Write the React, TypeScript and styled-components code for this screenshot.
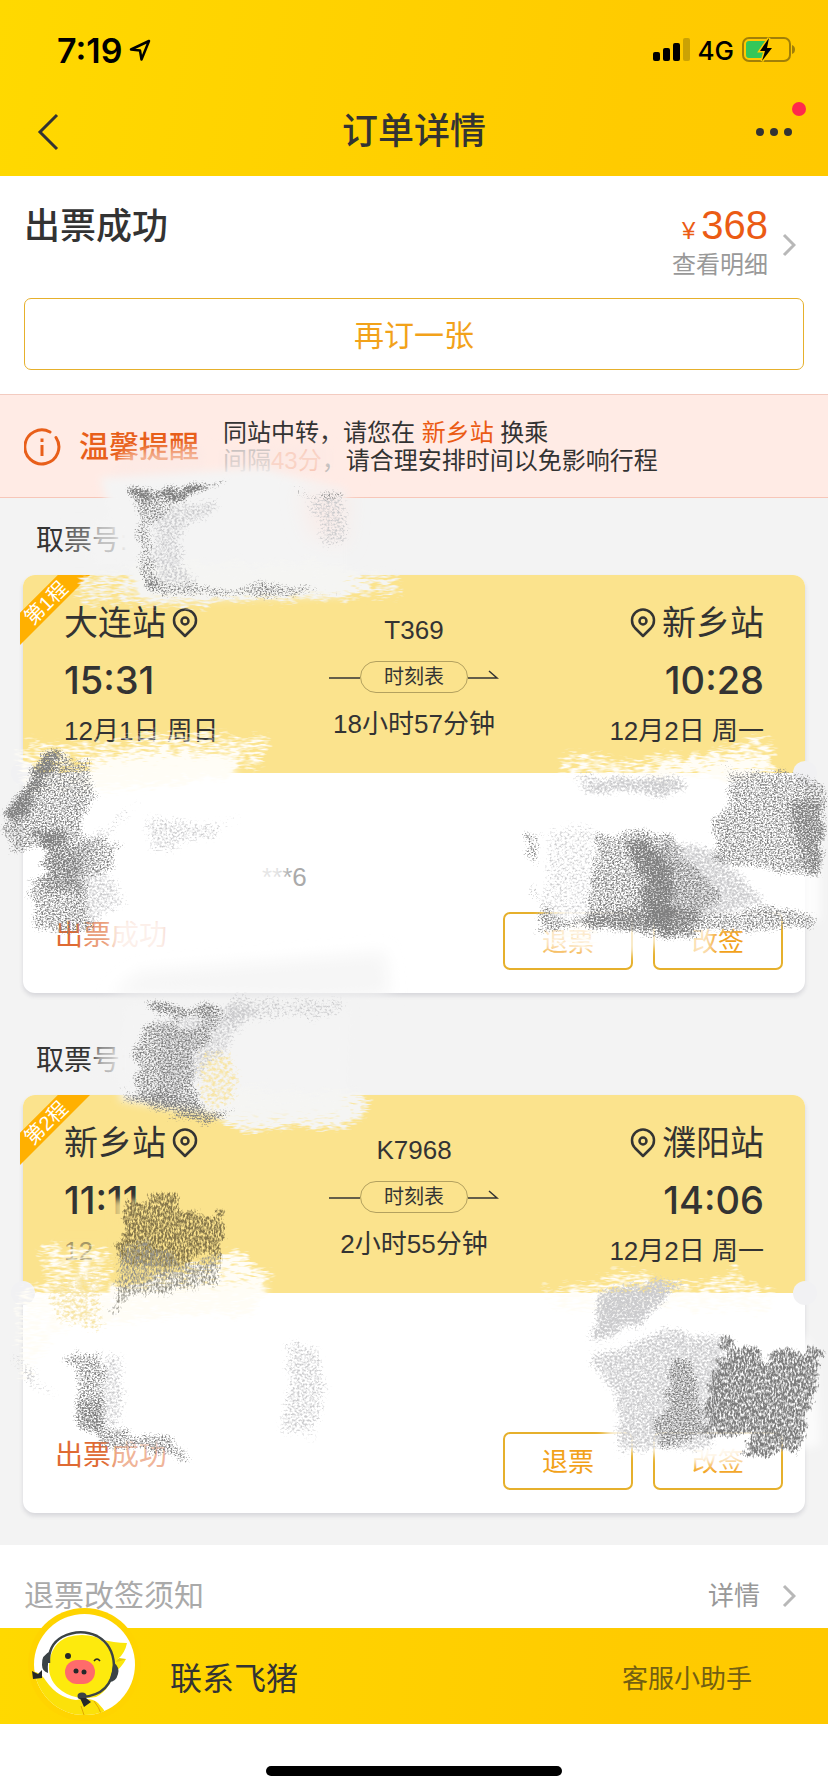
import React from "react";
import styled, { createGlobalStyle } from "styled-components";

const GlobalStyle = createGlobalStyle`
  *, *::before, *::after { box-sizing: border-box; }
  body { margin: 0; background: #fff; }
  body, button { font-family: "Liberation Sans", "Noto Sans CJK SC", sans-serif; color: #333; }
  h1, h2, p { margin: 0; font-weight: 400; }
`;

const Page = styled.div`
  position: relative;
  overflow: hidden;
  min-height: 100vh;
  display: flex;
  flex-direction: column;
`;

/* ---------- header ---------- */

const Header = styled.header`
  background: linear-gradient(100deg, #ffd900 0%, #ffcb00 75%, #ffc900 100%);
`;

const StatusBar = styled.div`
  display: flex;
  align-items: center;
  height: 88px;
  padding: 12px 32px 0 57px;
  font-family: Inter, sans-serif;
  color: #000;
`;

const Clock = styled.span`
  font-size: 34px;
  font-weight: 600;
  margin-right: 6px;
`;

const StatusIcons = styled.div`
  display: flex;
  align-items: center;
  gap: 8px;
  margin-left: auto;
`;

const Network = styled.span`
  font-size: 26px;
  font-weight: 500;
`;

const NavBar = styled.div`
  display: grid;
  grid-template-columns: 120px 1fr 120px;
  align-items: center;
  height: 88px;
`;

const NavTitle = styled.h1`
  text-align: center;
  font-size: 36px;
  line-height: 48px;
  font-weight: 500;
`;

const NavButton = styled.button<{ $end?: boolean }>`
  position: relative;
  display: flex;
  align-items: center;
  justify-content: ${(p) => (p.$end ? "flex-end" : "flex-start")};
  height: 88px;
  padding: 0 36px;
  border: 0;
  background: none;
`;

const UnreadDot = styled.span`
  position: absolute;
  top: 14px;
  right: 22px;
  width: 14px;
  height: 14px;
  border-radius: 50%;
  background: #ff2a4c;
`;

/* ---------- order summary ---------- */

const Summary = styled.section`
  padding: 24px;
  background: #fff;
`;

const SummaryTop = styled.div`
  display: flex;
  justify-content: space-between;
  margin-bottom: 18px;
`;

const SummaryTitle = styled.h2`
  font-size: 36px;
  line-height: 54px;
  font-weight: 500;
`;

const PriceLink = styled.a`
  display: flex;
  align-items: center;
  gap: 14px;
  padding-right: 8px;
  color: #999;
  text-decoration: none;

  > svg {
    margin-top: 10px;
  }
`;

const PriceColumn = styled.span`
  display: flex;
  flex-direction: column;
  align-items: flex-end;
  font-size: 24px;
  line-height: 30px;
`;

const Price = styled.span`
  display: flex;
  align-items: baseline;
  height: 50px;
  font-size: 40px;
  line-height: 50px;
  color: #eb5b14;
`;

const Currency = styled.small`
  font-size: 24px;
  margin-right: 6px;
`;

const OutlineButton = styled.button<{ $size: "wide" | "small" }>`
  width: ${(p) => (p.$size === "wide" ? "100%" : "130px")};
  height: ${(p) => (p.$size === "wide" ? 72 : 58)}px;
  padding: 0 0 3px;
  border: ${(p) => (p.$size === "wide" ? 1 : 2)}px solid #e6b02c;
  border-radius: 7px;
  background: #fff;
  color: #f2a21a;
  font-size: ${(p) => (p.$size === "wide" ? 30 : 26)}px;
`;

/* ---------- transfer notice ---------- */

const Notice = styled.section`
  display: flex;
  align-items: center;
  min-height: 104px;
  padding: 1px 24px 0;
  background: #ffebe5;
  border-top: 1px solid #f3cbc0;
  border-bottom: 1px solid #f7c6b8;
`;

const NoticeTitle = styled.h2`
  margin: 0 24px 0 18px;
  font-size: 30px;
  line-height: 40px;
  font-weight: 500;
  color: #e85f1a;
`;

const NoticeText = styled.p`
  font-size: 24px;
  line-height: 28px;
`;

const Accent = styled.span<{ $faded?: boolean }>`
  color: ${(p) => (p.$faded ? "#f6b49a" : "#eb5b14")};
`;

const Muted = styled.span`
  color: #aaa;
`;

/* ---------- tickets ---------- */

const Trips = styled.main`
  display: flex;
  flex-direction: column;
  gap: 25px;
  padding: 0 23px 32px;
  background: #f3f3f3;
`;

const PickupLabel = styled.h2`
  height: 77px;
  padding: 23px 0 0 13px;
  font-size: 28px;
  line-height: 40px;
`;

const Card = styled.article`
  position: relative;
  border-radius: 12px;
  background: #fff;
  box-shadow: 0 3px 4px rgba(60, 60, 90, 0.15);
`;

const Journey = styled.div`
  position: relative;
  display: grid;
  grid-template-columns: 1fr 170px 1fr;
  height: 198px;
  padding: 28px 41px 0;
  border-radius: 12px 12px 0 0;
  background: #fbe38d;
`;

const Perforation = styled.div`
  position: absolute;
  left: 0;
  right: 0;
  bottom: -1px;
  border-bottom: 1px dashed #fff;
`;

const Notch = styled.span<{ $side: "left" | "right" }>`
  position: absolute;
  bottom: -12px;
  ${(p) => p.$side}: -12px;
  width: 24px;
  height: 24px;
  border-radius: 50%;
  background: #f1f1f3;
`;

const Ribbon = styled.div`
  position: absolute;
  top: 0;
  left: -3px;
  width: 70px;
  height: 70px;
  background: #ffb000;
  clip-path: polygon(0 54%, 54% 0, 100% 0, 0 100%);
`;

const RibbonText = styled.span`
  position: absolute;
  top: 14px;
  left: -6px;
  width: 64px;
  text-align: center;
  font-size: 20px;
  line-height: 28px;
  color: #fff;
  transform: rotate(-45deg);
`;

const Stop = styled.div<{ $end?: boolean }>`
  display: flex;
  flex-direction: column;
  align-items: ${(p) => (p.$end ? "flex-end" : "flex-start")};
`;

const Station = styled.div<{ $end?: boolean }>`
  display: flex;
  flex-direction: ${(p) => (p.$end ? "row-reverse" : "row")};
  align-items: center;
  gap: 6px;
  font-size: 34px;
  line-height: 40px;
`;

const Time = styled.time`
  margin: 13px 0 11px;
  font-family: Inter, sans-serif;
  font-size: 38px;
  line-height: 48px;
  font-weight: 500;
`;

const DateText = styled.span`
  font-size: 26px;
  line-height: 32px;
  white-space: nowrap;
`;

const Middle = styled.div`
  display: flex;
  flex-direction: column;
  align-items: center;
  gap: 15px;
  padding-top: 11px;
  font-size: 26px;
  line-height: 32px;
  white-space: nowrap;
`;

const TimetableRow = styled.div`
  display: flex;
  align-items: center;
`;

const TimetableButton = styled.button`
  width: 108px;
  height: 32px;
  padding: 0;
  border: 1px solid #b3a15f;
  border-radius: 16px;
  background: none;
  font-size: 20px;
  line-height: 28px;
`;

const Passenger = styled.div`
  height: 220px;
  padding: 88px 22px 0 32px;
`;

const IdTail = styled.p`
  height: 32px;
  margin-bottom: 19px;
  padding-left: 207px;
  font-size: 26px;
  line-height: 32px;
  color: #aaa;
`;

const Actions = styled.div`
  display: flex;
  gap: 20px;
`;

const TicketState = styled.span`
  margin-right: auto;
  font-size: 28px;
  line-height: 48px;
  color: #df6a33;
`;

/* ---------- footer ---------- */

const RulesLink = styled.a`
  display: flex;
  align-items: flex-start;
  justify-content: space-between;
  padding: 31px 32px 12px 24px;
  background: #fff;
  color: #aaa;
  text-decoration: none;
  font-size: 30px;
  line-height: 40px;
`;

const RulesDetail = styled.span`
  display: flex;
  align-items: center;
  gap: 22px;
  font-size: 26px;
  color: #999;
`;

const Contact = styled.a`
  position: relative;
  display: flex;
  align-items: center;
  justify-content: space-between;
  height: 96px;
  padding: 0 76px 0 170px;
  background: linear-gradient(95deg, #ffd900 0%, #ffcb00 75%, #ffc900 100%);
  color: #333;
  text-decoration: none;
  font-size: 32px;
`;

const Helper = styled.span`
  font-size: 26px;
  color: #735f12;
`;

const Avatar = styled.svg`
  position: absolute;
  left: 24px;
  bottom: 0;
`;

const HomeArea = styled.div`
  display: flex;
  justify-content: center;
  padding: 42px 0 16px;
`;

const HomeBar = styled.span`
  width: 296px;
  height: 10px;
  border-radius: 5px;
  background: #000;
`;

const Scribbles = styled.svg`
  position: absolute;
  top: 0;
  left: 0;
  width: 100%;
  pointer-events: none;
`;

/* ---------- icons ---------- */

const LocationArrow = () => (
  <svg width="24" height="24" viewBox="0 0 24 24" fill="none" stroke="#000" strokeWidth="2.5" strokeLinejoin="round">
    <path d="M21 3 L3 11.5 L12 12.5 L13.5 21.5 Z" />
  </svg>
);

const Signal = () => (
  <svg width="37" height="24" viewBox="0 0 37 24">
    <rect x="0" y="14" width="7" height="9" rx="2" />
    <rect x="10" y="10" width="7" height="13" rx="2" />
    <rect x="20" y="5" width="7" height="18" rx="2" />
    <rect x="30" y="0" width="7" height="23" rx="2" fill="#cba204" />
  </svg>
);

const Battery = () => (
  <svg width="54" height="28" viewBox="0 0 54 28">
    <rect x="1" y="2" width="47" height="23" rx="6" fill="none" stroke="#a17f08" strokeWidth="2" />
    <path d="M7 5 H27 L20 15 H24 L21 22 H7 Q4 22 4 19 V8 Q4 5 7 5Z" fill="#34c759" />
    <path d="M50 9 Q53 10 53 13.5 Q53 17 50 18Z" fill="#a17f08" />
    <path d="M27 2 L18 15 H23 L20 25 L30 12 H25Z" fill="#000" stroke="#ffcb00" strokeWidth="3" paintOrder="stroke" />
  </svg>
);

const BackIcon = () => (
  <svg width="24" height="38" viewBox="0 0 24 38" fill="none" stroke="#333" strokeWidth="3">
    <path d="M21 2 L4 19 L21 36" />
  </svg>
);

const MoreIcon = () => (
  <svg width="36" height="8" viewBox="0 0 36 8" fill="#333">
    <circle cx="4" cy="4" r="4" />
    <circle cx="18" cy="4" r="4" />
    <circle cx="32" cy="4" r="4" />
  </svg>
);

const Chevron = () => (
  <svg width="14" height="24" viewBox="0 0 14 24" fill="none" stroke="#b8b8b8" strokeWidth="3">
    <path d="M2 2 L12 12 L2 22" />
  </svg>
);

const InfoIcon = () => (
  <svg width="37" height="38" viewBox="0 0 37 38" fill="none" stroke="#e85f1a" strokeWidth="3">
    <path d="M26 4 A17 17 0 1 0 32 9.5" strokeLinecap="round" />
    <path d="M18 17 V28" />
    <path d="M18 10.5 V14" />
  </svg>
);

const Pin = () => (
  <svg width="26" height="30" viewBox="0 0 26 30" fill="none" stroke="#333" strokeWidth="2.5">
    <path d="M13 28 L5 20 A11 11 0 1 1 21 20 Z" strokeLinejoin="round" />
    <circle cx="13" cy="13" r="3.5" />
  </svg>
);

const Lead = () => (
  <svg width="31" height="16" viewBox="0 0 31 16" stroke="#333" strokeWidth="1.5">
    <path d="M0 9 H31" />
  </svg>
);

const Arrow = () => (
  <svg width="31" height="16" viewBox="0 0 31 16" fill="none" stroke="#333" strokeWidth="1.5">
    <path d="M0 9 H29 L21 2" />
  </svg>
);

const PigAvatar = () => (
  <Avatar width="120" height="119" viewBox="0 0 120 119" aria-hidden="true">
    <defs>
      <clipPath id="face">
        <circle cx="60.5" cy="59.5" r="50.5" />
      </clipPath>
    </defs>
    <circle cx="60.5" cy="59.5" r="56.5" fill="#ffd400" />
    <circle cx="60.5" cy="59.5" r="50.5" fill="#fff" />
    <g clipPath="url(#face)">
      <path d="M76 34 Q90 38 103 38 Q101 48 94 54 L102 54 Q98 62 90 68 Z" fill="#fbe70c" />
      <path d="M92 57 Q98 56 102 54 L95 53Z" fill="#e9cd08" />
      <path d="M6 66 Q16 66 22 76 Q34 93 52 95 Q68 92 74 98 Q80 104 84 112 L60 122 L6 118Z" fill="#fbe10a" />
      <path d="M20 70 Q30 90 54 94 Q74 92 88 72 Q90 40 72 31 Q58 27 44 31 Q22 42 22 60 Z" fill="#fff" />
      <path d="M25 60 Q27 38 44 32 Q58 28 72 32 Q89 41 90 62 Q88 84 72 92 Q52 96 38 86 Q24 76 25 60Z" fill="#fdea0d" />
      <path d="M57 101 L61 113 M70 96 Q75 102 78 111" stroke="#e0a700" fill="none" />
    </g>
    <path d="M25 58 Q24 40 38 32 Q56 23 73 31 Q89 40 90 60 Q88 90 58 92" fill="none" stroke="#3b4346" strokeWidth="2.5" />
    <path d="M27 46 Q17 50 18 60 Q18 66 24 68 Q23 56 27 46Z" fill="#3b4346" />
    <path d="M89 57 Q96 62 94 69 Q92 77 85 77 Q89 67 89 57Z" fill="#3b4346" />
    <ellipse cx="58" cy="91" rx="4.5" ry="3.5" fill="#3b4346" />
    <path d="M8 66 L14 69 L18 65 L18 73 L9 74Z M56 93 L60 102 L67 97 L62 93Z" fill="#25282a" />
    <circle cx="44" cy="51" r="3" fill="#25282a" />
    <path d="M70 56 Q73 52 76 56" fill="none" stroke="#25282a" strokeWidth="1.5" />
    <rect x="41" y="55" width="30" height="24" rx="12" fill="#ff6b6b" />
    <circle cx="52" cy="66" r="2.5" fill="#25282a" />
    <circle cx="60" cy="67" r="2.5" fill="#25282a" />
  </Avatar>
);

/* ---------- crayon and eraser marks over private data ---------- */

type Mark = [d: string, strength: number];
type Layer = { id: string; color: string; freq: string; blur: number; marks: Mark[] };

const washes: Layer[] = [
  {
    id: "blush", color: "#fbeae5", freq: "", blur: 5,
    marks: [["M222 449 L330 445 L330 472 L222 476Z", 0.6], ["M125 452 L205 446 L202 476 L110 480Z", 0.6]],
  },
  {
    id: "paper", color: "#f4f4f4", freq: "", blur: 4,
    marks: [
      ["M100 478 L262 468 L345 490 L345 595 L145 600 L122 550Z", 1],
      ["M94 520 L132 520 L132 565 L94 565Z", 0.75],
      ["M68 522 L94 522 L94 558 L68 558Z", 0.3],
      ["M125 1005 L350 1010 L345 1115 L230 1118 L120 1100Z", 1],
      ["M96 1045 L140 1045 L140 1080 L96 1080Z", 0.7],
      ["M116 1042 L140 1042 L140 1080 L116 1080Z", 1],
    ],
  },
  {
    id: "rose", color: "#fbe9e5", freq: "", blur: 10,
    marks: [["M300 490 L350 490 L345 545 L310 535Z", 0.7]],
  },
  {
    id: "mist", color: "#f4f4f4", freq: "", blur: 8,
    marks: [["M140 972 L385 952 L390 996 L320 1000 L110 995Z", 0.8]],
  },
  {
    id: "butter", color: "#fbe38d", freq: "", blur: 3,
    marks: [
      ["M112 1200 L140 1200 L140 1225 L112 1225Z", 0.85],
      ["M62 1238 L100 1238 L100 1268 L62 1268Z", 0.6],
    ],
  },
  {
    id: "white", color: "#fff", freq: "", blur: 4,
    marks: [
      ["M95 772 L120 762 L230 757 L240 790 L250 900 L80 900 L60 800Z", 0.95],
      ["M112 915 L170 915 L170 955 L112 955Z", 0.9],
      ["M84 915 L112 915 L112 955 L84 955Z", 0.35],
      ["M250 860 L284 860 L284 890 L250 890Z", 0.7],
      ["M548 904 L640 904 L790 904 L790 916 L690 928 L640 955 L535 950 L535 925Z", 0.75],
      ["M688 925 L712 925 L712 958 L688 958Z", 0.7],
      ["M560 905 L775 905 L770 925 L560 930Z", 0.8],
      ["M660 785 L795 795 L820 815 L820 920 L700 930Z", 0.8],
      ["M110 1290 L265 1285 L260 1460 L110 1440Z", 0.95],
      ["M112 1440 L175 1440 L175 1475 L112 1475Z", 0.5],
      ["M598 1424 L790 1424 L790 1446 L700 1462 L620 1450Z", 0.85],
      ["M685 1440 L760 1440 L760 1466 L685 1466Z", 0.65],
      ["M640 1300 L785 1315 L815 1350 L820 1445 L795 1450 L785 1370Z", 0.7],
    ],
  },
];

const grains: Layer[] = [
  {
    id: "paperGrain", color: "#f5f5f3", freq: "0.1 0.45", blur: 5,
    marks: [
      ["M75 570 L400 570 L405 600 L300 602 L160 610 L75 604Z", 0.6],
      ["M130 560 L345 560 L375 590 L240 600 L135 592Z", 0.8],
      ["M230 1085 L368 1088 L368 1116 L340 1130 L235 1132 L205 1112Z", 0.85],
    ],
  },
  {
    id: "whiteGrain", color: "#fffdf6", freq: "0.1 0.4", blur: 5,
    marks: [
      ["M12 742 L90 738 L190 728 L275 738 L262 770 L130 795 L20 798Z", 0.58],
      ["M100 757 L232 752 L235 780 L75 785Z", 0.85],
      ["M568 748 L610 758 L700 750 L772 730 L778 765 L770 780 L545 780Z", 0.6],
      ["M660 765 L765 757 L770 780 L640 782Z", 0.8],
      ["M40 1240 L115 1245 L110 1320 L60 1335 L15 1395 L15 1285 L40 1285Z", 0.58],
      ["M115 1290 L235 1250 L275 1272 L258 1315 L95 1325Z", 0.8],
      ["M532 1288 L630 1268 L690 1285 L732 1266 L775 1290 L775 1315 L560 1315Z", 0.58],
      ["M570 915 L600 915 L600 950 L545 945Z", 0.5],
    ],
  },
  {
    id: "straw", color: "#f7e5a8", freq: "0.25 0.35", blur: 5,
    marks: [
      ["M195 1050 L240 1050 L235 1100 L200 1112Z", 0.55],
      ["M45 1282 L105 1265 L102 1335 L55 1325Z", 0.55],
    ],
  },
  {
    id: "faint", color: "#cbcbcd", freq: "0.4 0.5", blur: 5,
    marks: [
      ["M140 815 L250 818 L190 850 L150 855Z", 0.48],
      ["M574 776 L686 776 L686 796 L580 794Z", 0.7],
      ["M545 825 L600 825 L595 930 L540 925Z", 0.42],
      ["M150 790 L90 860 L130 900 L85 935 L60 860Z", 0.52],
      ["M225 995 L345 998 L340 1020 L230 1022Z", 0.48],
      ["M595 1290 L695 1274 L640 1325 L590 1345Z", 0.75],
      ["M588 1354 L670 1328 L730 1340 L712 1450 L620 1455 L605 1390Z", 0.62],
      ["M285 1338 L320 1340 L328 1390 L318 1440 L280 1438Z", 0.5],
      ["M100 1350 L125 1355 L125 1430 L95 1430Z", 0.52],
      ["M0 1342 L38 1375 L70 1402 L30 1388Z", 0.55],
      ["M300 490 L345 495 L350 545 L325 550Z", 0.5],
      ["M150 505 L225 500 L180 540 L200 585 L150 590Z", 0.54],
      ["M215 1005 L250 1010 L225 1060 L160 1110 L150 1020Z", 0.55],
      ["M655 835 L720 850 L770 905 L700 925 L655 925Z", 0.64],
    ],
  },
  {
    id: "pencil", color: "#808080", freq: "0.55 0.65", blur: 3,
    marks: [
      ["M128 490 L178 490 L258 470 L178 501 L130 500Z", 0.85],
      ["M134 500 L180 503 L150 530 L160 580 L145 592 L135 540Z", 0.5],
      ["M142 580 L250 586 L260 580 L338 590 L335 596 L150 598Z", 0.5],
      ["M290 489 L345 492 L345 502 L300 500Z", 0.5],
      ["M50 748 L92 765 L98 800 L80 835 L40 850 L10 855 L0 830 L25 785Z", 0.53],
      ["M50 748 L60 752 L20 820 L5 825 L0 820Z", 0.55],
      ["M38 830 L125 840 L115 868 L88 885 L90 910 L100 937 L33 932 L27 885 L42 870Z", 0.52],
      ["M40 850 L80 845 L78 890 L45 890Z", 0.3],
      ["M724 765 L808 774 L828 785 L822 878 L780 875 L715 862 L708 815 L727 812Z", 0.52],
      ["M790 800 L826 805 L822 880 L805 876Z", 0.35],
      ["M588 830 L670 828 L690 860 L725 890 L700 935 L670 940 L640 930 L590 930 L582 890 L595 870Z", 0.53],
      ["M625 843 L650 840 L672 875 L672 930 L645 930 L645 880Z", 0.5],
      ["M590 912 L700 907 L690 935 L592 932Z", 0.35],
      ["M523 826 L548 830 L536 850 L542 905 L590 920 L590 932 L530 932 L543 905 L530 895 L540 870 L526 860Z", 0.54],
      ["M720 910 L785 903 L828 922 L750 934 L700 930Z", 0.52],
      ["M132 996 L160 1003 L220 1006 L236 1024 L170 1017 L140 1007Z", 0.62],
      ["M138 1020 L222 1025 L195 1060 L200 1105 L140 1100 L132 1050Z", 0.53],
      ["M106 1086 L245 1112 L200 1124 L150 1110 L130 1102Z", 0.6],
      ["M60 1350 L108 1350 L104 1420 L190 1445 L195 1462 L100 1447 L72 1420 L78 1385Z", 0.52],
      ["M80 1400 L102 1400 L110 1440 L80 1430Z", 0.25],
      ["M670 1355 L692 1355 L708 1435 L660 1455 L650 1430 L665 1390Z", 0.54],
    ],
  },
  {
    id: "crayon", color: "#7c7c7c", freq: "0.55 0.3", blur: 2,
    marks: [
      ["M722 1335 L733 1335 L735 1354 L744 1343 L760 1343 L764 1358 L780 1346 L794 1346 L798 1356 L812 1348 L826 1350 L798 1456 L790 1456 L786 1450 L770 1457 L744 1457 L746 1435 L702 1435 L713 1358 L721 1355Z", 0.66],
    ],
  },
  {
    id: "umber", color: "#84754a", freq: "0.55 0.3", blur: 2,
    marks: [
      ["M126 1197 L146 1204 L150 1195 L180 1192 L180 1210 L208 1212 L212 1222 L218 1208 L227 1208 L222 1258 L205 1250 L180 1272 L115 1262Z", 0.62],
    ],
  },
  {
    id: "ash", color: "#96948a", freq: "0.55 0.3", blur: 3,
    marks: [["M118 1245 L150 1238 L185 1262 L222 1252 L218 1290 L150 1292 L120 1308 L110 1308Z", 0.56]],
  },
];

const PrivacyMarks = () => (
  <Scribbles viewBox="0 0 828 1792" aria-hidden="true">
    <defs>
      {washes.map((l) => (
        <filter key={l.id} id={l.id} filterUnits="userSpaceOnUse" x="0" y="0" width="828" height="1792">
          <feGaussianBlur stdDeviation={l.blur} />
        </filter>
      ))}
      {grains.map((l, i) => (
        <filter
          key={l.id}
          id={l.id}
          filterUnits="userSpaceOnUse"
          x="0"
          y="0"
          width="828"
          height="1792"
          colorInterpolationFilters="sRGB"
        >
          <feTurbulence type="fractalNoise" baseFrequency={l.freq} numOctaves="2" seed={i + 3} result="n" />
          <feColorMatrix in="n" type="matrix" values="0 0 0 0 0  0 0 0 0 0  0 0 0 0 0  0 0 0 1 0" result="noise" />
          <feTurbulence type="fractalNoise" baseFrequency="0.04 0.12" numOctaves="3" seed={i + 20} result="warp" />
          <feDisplacementMap in="SourceGraphic" in2="warp" scale="24" xChannelSelector="R" yChannelSelector="G" result="rough" />
          <feGaussianBlur in="rough" stdDeviation={l.blur} result="soft" />
          <feComposite in="soft" in2="noise" operator="arithmetic" k1="0" k2="2.4" k3="3" k4="-2.4" result="mask" />
          <feComponentTransfer in="soft" result="reach">
            <feFuncA type="linear" slope="5" intercept="-0.6" />
          </feComponentTransfer>
          <feFlood floodColor={l.color} />
          <feComposite in2="mask" operator="in" />
          <feComposite in2="reach" operator="in" />
        </filter>
      ))}
    </defs>
    {washes.map((l) => (
      <g key={l.id} filter={`url(#${l.id})`} fill={l.color}>
        {l.marks.map(([d, o]) => (
          <path key={d} d={d} fillOpacity={o} />
        ))}
      </g>
    ))}
    {grains.map((l) => (
      <g key={l.id} filter={`url(#${l.id})`} fill="#000">
        {l.marks.map(([d, o]) => (
          <path key={d} d={d} fillOpacity={o} />
        ))}
      </g>
    ))}
  </Scribbles>
);

/* ---------- data ---------- */

type StopInfo = { station: string; time: string; date: string };
type Trip = { leg: string; train: string; duration: string; from: StopInfo; to: StopInfo; idTail: string };

const trips: Trip[] = [
  {
    leg: "第1程",
    train: "T369",
    duration: "18小时57分钟",
    from: { station: "大连站", time: "15:31", date: "12月1日 周日" },
    to: { station: "新乡站", time: "10:28", date: "12月2日 周一" },
    idTail: "***6",
  },
  {
    leg: "第2程",
    train: "K7968",
    duration: "2小时55分钟",
    from: { station: "新乡站", time: "11:11", date: "12" },
    to: { station: "濮阳站", time: "14:06", date: "12月2日 周一" },
    idTail: "",
  },
];

const StopBlock = ({ stop, end }: { stop: StopInfo; end?: boolean }) => (
  <Stop $end={end}>
    <Station $end={end}>
      {stop.station}
      <Pin />
    </Station>
    <Time>{stop.time}</Time>
    <DateText>{stop.date}</DateText>
  </Stop>
);

const TripCard = ({ trip }: { trip: Trip }) => (
  <section>
    <PickupLabel>取票号:</PickupLabel>
    <Card>
      <Journey>
        <StopBlock stop={trip.from} />
        <Middle>
          <span>{trip.train}</span>
          <TimetableRow>
            <Lead />
            <TimetableButton type="button">时刻表</TimetableButton>
            <Arrow />
          </TimetableRow>
          <span>{trip.duration}</span>
        </Middle>
        <StopBlock stop={trip.to} end />
        <Perforation />
        <Notch $side="left" />
        <Notch $side="right" />
      </Journey>
      <Ribbon>
        <RibbonText>{trip.leg}</RibbonText>
      </Ribbon>
      <Passenger>
        <IdTail>{trip.idTail}</IdTail>
        <Actions>
          <TicketState>出票成功</TicketState>
          <OutlineButton type="button" $size="small">退票</OutlineButton>
          <OutlineButton type="button" $size="small">改签</OutlineButton>
        </Actions>
      </Passenger>
    </Card>
  </section>
);

export default function App() {
  return (
    <Page>
      <GlobalStyle />
      <Header>
        <StatusBar>
          <Clock>7:19</Clock>
          <LocationArrow />
          <StatusIcons>
            <Signal />
            <Network>4G</Network>
            <Battery />
          </StatusIcons>
        </StatusBar>
        <NavBar>
          <NavButton type="button" aria-label="返回">
            <BackIcon />
          </NavButton>
          <NavTitle>订单详情</NavTitle>
          <NavButton type="button" aria-label="更多" $end>
            <MoreIcon />
            <UnreadDot />
          </NavButton>
        </NavBar>
      </Header>

      <Summary>
        <SummaryTop>
          <SummaryTitle>出票成功</SummaryTitle>
          <PriceLink href="#price">
            <PriceColumn>
              <Price>
                <Currency>¥</Currency>368
              </Price>
              查看明细
            </PriceColumn>
            <Chevron />
          </PriceLink>
        </SummaryTop>
        <OutlineButton type="button" $size="wide">再订一张</OutlineButton>
      </Summary>

      <Notice>
        <InfoIcon />
        <NoticeTitle>温馨提醒</NoticeTitle>
        <NoticeText>
          同站中转，请您在 <Accent>新乡站</Accent> 换乘
          <br />
          <Muted>间隔</Muted>
          <Accent $faded>43分</Accent>
          <Muted>，</Muted>请合理安排时间以免影响行程
        </NoticeText>
      </Notice>

      <Trips>
        {trips.map((t) => (
          <TripCard key={t.leg} trip={t} />
        ))}
      </Trips>

      <RulesLink href="#rules">
        退票改签须知
        <RulesDetail>
          详情
          <Chevron />
        </RulesDetail>
      </RulesLink>
      <Contact href="#contact">
        <PigAvatar />
        联系飞猪
        <Helper>客服小助手</Helper>
      </Contact>
      <HomeArea>
        <HomeBar />
      </HomeArea>
      <PrivacyMarks />
    </Page>
  );
}
